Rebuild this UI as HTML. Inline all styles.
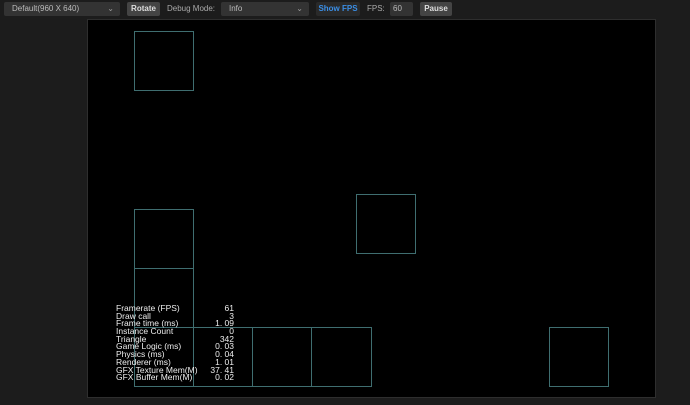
<!DOCTYPE html><html><head><style>
body{margin:0;width:690px;height:405px;background:#1c1c1c;font-family:"Liberation Sans",sans-serif;position:relative;overflow:hidden}
.a{position:absolute;box-sizing:border-box}
.sel{background:#333;color:#bbb;font-size:8px;height:14px;line-height:14px;padding-left:8px;border-radius:2px}
.btn{background:#444;color:#ddd;font-size:8px;font-weight:bold;height:14px;line-height:14px;text-align:center;border-radius:2px}
.lbl{color:#aaa;font-size:8px;line-height:14px;height:14px}
.b{border:1px solid #3f6e70}
.s{position:absolute;left:116px;top:305px;color:#eee;font-size:8.5px;line-height:7.7px;width:118px}
.s div{display:flex;justify-content:space-between;height:7.7px}
</style></head><body>
<div class="a sel" style="left:4px;top:2px;width:116px">Default(960 X 640)<span style="position:absolute;right:6px;color:#999">⌄</span></div>
<div class="a btn" style="left:127px;top:2px;width:33px">Rotate</div>
<div class="a lbl" style="left:167px;top:2px">Debug Mode:</div>
<div class="a sel" style="left:221px;top:2px;width:88px">Info<span style="position:absolute;right:6px;color:#999">⌄</span></div>
<div class="a btn" style="left:316px;top:2px;width:44px;background:#2a2a2a;color:#3a8ee6">Show FPS</div>
<div class="a lbl" style="left:367px;top:2px">FPS:</div>
<div class="a sel" style="left:390px;top:2px;width:23px;padding-left:3px">60</div>
<div class="a btn" style="left:420px;top:2px;width:32px">Pause</div>
<div class="a" style="left:87px;top:19px;width:569px;height:379px;background:#000;border:1px solid #2e2e2e"></div>
<div class="a b" style="left:134px;top:31px;width:60px;height:60px"></div>
<div class="a b" style="left:134px;top:209px;width:60px;height:60px"></div>
<div class="a b" style="left:134px;top:268px;width:60px;height:60px"></div>
<div class="a b" style="left:356px;top:194px;width:60px;height:60px"></div>
<div class="a b" style="left:134px;top:327px;width:60px;height:60px"></div>
<div class="a b" style="left:193px;top:327px;width:60px;height:60px"></div>
<div class="a b" style="left:252px;top:327px;width:60px;height:60px"></div>
<div class="a b" style="left:311px;top:327px;width:61px;height:60px"></div>
<div class="a b" style="left:549px;top:327px;width:60px;height:60px"></div>
<div class="s">
<div><span>Framerate (FPS)</span><span>61</span></div>
<div><span>Draw call</span><span>3</span></div>
<div><span>Frame time (ms)</span><span>1. 09</span></div>
<div><span>Instance Count</span><span>0</span></div>
<div><span>Triangle</span><span>342</span></div>
<div><span>Game Logic (ms)</span><span>0. 03</span></div>
<div><span>Physics (ms)</span><span>0. 04</span></div>
<div><span>Renderer (ms)</span><span>1. 01</span></div>
<div><span>GFX Texture Mem(M)</span><span>37. 41</span></div>
<div><span>GFX Buffer Mem(M)</span><span>0. 02</span></div>
</div>
</body></html>
